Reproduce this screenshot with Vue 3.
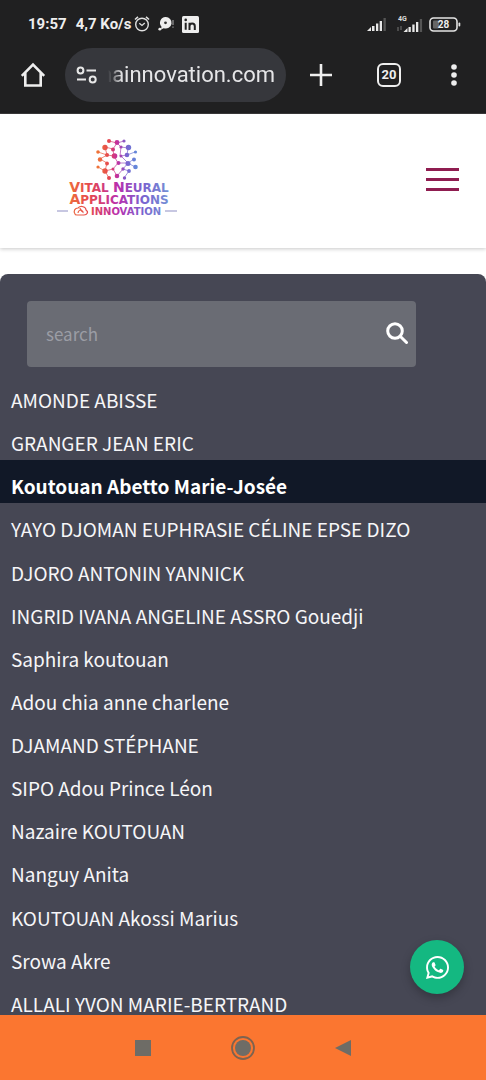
<script setup>
import { ref } from 'vue'

const address = ref('nainnovation.com')
const query = ref('')
const selected = ref(2)
const people = [
  'AMONDE ABISSE',
  'GRANGER JEAN ERIC',
  'Koutouan Abetto Marie-Josée',
  'YAYO DJOMAN EUPHRASIE CÉLINE EPSE DIZO',
  'DJORO ANTONIN YANNICK',
  'INGRID IVANA ANGELINE ASSRO Gouedji',
  'Saphira koutouan',
  'Adou chia anne charlene',
  'DJAMAND STÉPHANE',
  'SIPO Adou Prince Léon',
  'Nazaire KOUTOUAN',
  'Nanguy Anita',
  'KOUTOUAN Akossi Marius',
  'Srowa Akre',
  'ALLALI YVON MARIE-BERTRAND',
]
</script>

<template>
  <div class="screen">
    <div class="browser">
      <div class="status">
        <span class="time">19:57</span>
        <span class="rate">4,7 Ko/s</span>
        <svg class="alarm" width="16" height="18" viewBox="0 0 16 18" fill="none" stroke="#e0e0e0">
          <circle cx="8" cy="9.500" r="6.300" stroke-width="1.400" />
          <path d="M1 4.500 4 1.800M15 4.500 12 1.800" stroke-width="1.600" />
          <path d="M5.300 8.200 8 10.500 10.800 8" stroke-width="1.300" />
        </svg>
        <svg class="chat" width="16" height="16" viewBox="0 0 16 16">
          <path d="M7.500 1a5.800 5.800 0 1 1-1.800 11.200L3 13.500l.5-2.800A5.800 5.800 0 0 1 7.500 1z" fill="#eee" />
          <circle cx="7.500" cy="6.800" r="1.400" fill="#333" />
          <circle cx="1.800" cy="13.200" r="1.400" fill="#eee" />
          <path d="M15 4v5M15 10.500v1.200" stroke="#999" stroke-width="1.200" />
        </svg>
        <svg width="17" height="17" viewBox="0 0 17 17">
          <rect width="17" height="17" rx="1.500" fill="#eee" />
          <path d="M3.700 6.800v7M7.500 14V6.800M7.500 10.200c0-3.600 5.300-3.600 5.300 0V14" fill="none" stroke="#222" stroke-width="2" />
          <circle cx="3.700" cy="3.900" r="1.300" fill="#222" />
        </svg>
        <svg class="signal" width="20" height="14" viewBox="0 0 20 14">
          <path d="M0 14l4-4v4zM5 9h2.500v5H5zM9 6.500h2.300V14H9zM12.700 4H15v10h-2.300z" fill="#e8e8e8" />
          <path d="M16.500 1h2.300v13h-2.300z" fill="#555" />
        </svg>
        <svg class="signal4g" width="26" height="18" viewBox="0 0 26 18">
          <text x="1" y="6" font-family="Roboto, sans-serif" font-size="7" font-weight="700" fill="#ddd">4G</text>
          <path d="M1 12v4M4 11v4" stroke="#777" stroke-width="1" />
          <path d="M6.500 17l4-4v4zM11.500 12h2.300v5h-2.300zM15.300 9.500h2.300V17h-2.300zM19 7h2.300v10H19z" fill="#e8e8e8" />
          <path d="M22.800 4h2.300v13h-2.300z" fill="#555" />
        </svg>
        <svg width="33" height="15" viewBox="0 0 33 15">
          <rect x="1" y="1" width="27" height="13" rx="3.500" fill="none" stroke="#e4e4e4" stroke-width="1.600" />
          <rect x="4" y="3.500" width="6" height="8" rx="1" fill="#666" />
          <rect x="29.500" y="5.500" width="1.800" height="4" rx=".9" fill="#e4e4e4" />
          <text x="14.500" y="11" text-anchor="middle" font-family="Roboto, sans-serif" font-size="10" font-weight="700" fill="#eee">28</text>
        </svg>
      </div>
      <div class="toolbar">
        <button class="tool home" aria-label="Home">
          <svg width="26" height="26" viewBox="0 0 26 26" fill="none" stroke="#eee" stroke-width="2.600">
            <path d="M1.800 13.800 13 2.500l11.200 11.300M5.300 11v12.500h15.400V11" />
          </svg>
        </button>
        <div class="pill">
          <svg width="22" height="18" viewBox="0 0 22 18" fill="none" stroke="#e8e8e8" stroke-width="2">
            <circle cx="4.500" cy="4.500" r="2.900" />
            <path d="M10.500 4.500H20M1 13.500h9" />
            <circle cx="16.700" cy="13.500" r="3" />
          </svg>
          <input v-model="address" class="address" type="text" aria-label="Address">
        </div>
        <button class="tool add" aria-label="New tab">
          <svg width="22" height="22" viewBox="0 0 22 22" stroke="#eee" stroke-width="2.600">
            <path d="M11 0v22M0 11h22" />
          </svg>
        </button>
        <button class="tool tabs" aria-label="Tabs"><span class="count">20</span></button>
        <button class="tool more" aria-label="Menu">
          <svg width="6" height="22" viewBox="0 0 6 22" fill="#eee">
            <circle cx="3" cy="3" r="2.800" />
            <circle cx="3" cy="11" r="2.800" />
            <circle cx="3" cy="19" r="2.800" />
          </svg>
        </button>
      </div>
    </div>

    <header class="site">
      <a href="#" class="logo" aria-label="Vital Neural Applications &amp; Innovation">
        <svg width="122" height="84" viewBox="56 136 122 84">
          <defs>
            <linearGradient id="brand" gradientUnits="userSpaceOnUse" x1="62" y1="0" x2="174" y2="0">
              <stop offset="0" stop-color="#f07a35" />
              <stop offset=".25" stop-color="#e5484f" />
              <stop offset=".5" stop-color="#b92fae" />
              <stop offset=".72" stop-color="#7a62cf" />
              <stop offset="1" stop-color="#7399d6" />
            </linearGradient>
            <linearGradient id="web" gradientUnits="userSpaceOnUse" x1="96" y1="0" x2="138" y2="0">
              <stop offset="0" stop-color="#f07a35" />
              <stop offset=".3" stop-color="#e5484f" />
              <stop offset=".5" stop-color="#c42f9e" />
              <stop offset=".72" stop-color="#7a62cf" />
              <stop offset="1" stop-color="#5f8fdb" />
            </linearGradient>
          </defs>
          <path
            d="M109 141l8 2 7-2M117 143l-4 6-8-2M98 152l9 3M105 147l2 8M128 148l-7-1M128 148l-1 7M135 152l-8 3M117 143l4 4-1 9M114 156l-7-1M114 156l-1-6M100 159l7-4M100 159l7 4M107 163l-2 8M98 167l7 4 4 7M105 171l8-2 4 7M114 156l4 7-5 6M118 163l9 0M128 163l-7-7 6-1M134 159l-6 4M135 167l-7-4M128 163l-5 6 6 2M123 169l-6 7M129 171l-5 7"
            fill="none" stroke="url(#web)" stroke-width=".7" />
          <g fill="url(#web)">
            <circle cx="109" cy="141" r="2" /><circle cx="117" cy="142.500" r="2.400" /><circle cx="124" cy="141" r="1.600" />
            <circle cx="105" cy="147.500" r="2.700" /><circle cx="113" cy="149.500" r="2" /><circle cx="121" cy="147" r="1.600" />
            <circle cx="128.500" cy="147.500" r="2.700" /><circle cx="98" cy="152" r="1.800" /><circle cx="135.500" cy="152" r="1.600" />
            <circle cx="107" cy="155" r="2" /><circle cx="114.500" cy="156" r="2.800" /><circle cx="121" cy="156" r="1.500" />
            <circle cx="127" cy="155" r="2.300" /><circle cx="100" cy="159.500" r="2.200" /><circle cx="134" cy="159.500" r="2" />
            <circle cx="107" cy="163.500" r="1.900" /><circle cx="118.500" cy="163" r="2" /><circle cx="128" cy="163.500" r="2.500" />
            <circle cx="98" cy="167" r="1.600" /><circle cx="135.500" cy="167" r="2.300" /><circle cx="105" cy="171" r="2.700" />
            <circle cx="113" cy="169" r="1.500" /><circle cx="123" cy="169" r="1.700" /><circle cx="129" cy="171" r="1.900" />
            <circle cx="109" cy="178" r="2" /><circle cx="117" cy="176" r="2.300" /><circle cx="124.500" cy="178" r="1.700" />
          </g>
          <g class="brand" fill="url(#brand)" text-anchor="middle">
            <text x="119" y="192"><tspan class="cap">V</tspan>ITAL <tspan class="cap">N</tspan>EURAL</text>
            <text x="119" y="204"><tspan class="cap">A</tspan>PPLICATIONS</text>
            <text x="126" y="215" class="last">INNOVATION</text>
          </g>
          <path d="M57 211h11M165 211h12" stroke="#8f8fc4" stroke-width="1" />
          <g fill="none" stroke="url(#brand)" stroke-width="1.200">
            <path d="M75 214c-2-3 0-6 3-6 3-3 8-1 8 2 3 2 1 5-2 5H77c-1 0-2 0-2-1zM78 213c0-3 4-4 4-1M80 208c0 3 4 2 3 5" />
          </g>
        </svg>
      </a>
      <button class="burger" aria-label="Open menu"><span /><span /><span /></button>
    </header>

    <main class="content">
      <section class="panel">
        <form class="search" @submit.prevent>
          <input v-model="query" type="search" placeholder="search" aria-label="search">
          <button class="find" aria-label="Submit search">
            <svg width="22" height="22" viewBox="0 0 22 22" fill="none" stroke="#fff" stroke-width="3">
              <circle cx="9" cy="9" r="7.300" />
              <path d="M14.200 14.200 20.500 20.500" stroke-linecap="round" />
            </svg>
          </button>
        </form>
        <ul class="people">
          <li v-for="(name, i) in people" :key="name">
            <a href="#" :class="{ active: i === selected }" @click.prevent="selected = i">{{ name }}</a>
          </li>
        </ul>
      </section>
      <a href="#" class="fab" aria-label="WhatsApp">
        <svg width="23" height="23" viewBox="0 32 448 448" fill="#fff">
          <path d="M380.900 97.100C339 55.100 283.200 32 223.900 32c-122.400 0-222 99.600-222 222 0 39.100 10.200 77.300 29.600 111L0 480l117.700-30.900c32.400 17.700 68.900 27 106.100 27h.1c122.300 0 224.100-99.600 224.100-222 0-59.300-25.200-115-67.100-157zm-157 341.600c-33.200 0-65.700-8.900-94-25.700l-6.700-4-69.800 18.300L72 359.200l-4.400-7c-18.500-29.400-28.200-63.300-28.200-98.200 0-101.700 82.800-184.500 184.600-184.500 49.300 0 95.600 19.200 130.400 54.100 34.800 34.900 56.200 81.200 56.100 130.500 0 101.800-84.900 184.600-186.600 184.600zm101.200-138.200c-5.500-2.800-32.800-16.200-37.900-18-5.100-1.900-8.800-2.800-12.500 2.800-3.700 5.600-14.300 18-17.600 21.800-3.200 3.700-6.500 4.200-12 1.400-32.600-16.300-54-29.100-75.500-66-5.700-9.800 5.700-9.100 16.300-30.300 1.800-3.700.9-6.900-.5-9.700-1.400-2.800-12.500-30.100-17.100-41.200-4.500-10.800-9.100-9.300-12.500-9.500-3.200-.2-6.900-.2-10.600-.2-3.700 0-9.700 1.400-14.800 6.900-5.100 5.600-19.400 19-19.400 46.300 0 27.300 19.900 53.700 22.600 57.400 2.800 3.700 39.100 59.700 94.800 83.800 35.200 15.200 49 16.500 66.600 13.900 10.700-1.600 32.800-13.400 37.400-26.400 4.600-13 4.600-24.100 3.200-26.400-1.300-2.500-5-3.900-10.500-6.600z" />
        </svg>
      </a>
    </main>

    <nav class="system">
      <button aria-label="Recent apps">
        <svg width="16" height="16" viewBox="0 0 16 16"><rect width="16" height="16" fill="#6e6c66" /></svg>
      </button>
      <button aria-label="Home screen">
        <svg width="24" height="24" viewBox="0 0 24 24">
          <circle cx="12" cy="12" r="11" fill="none" stroke="#7d6350" stroke-width="1.800" />
          <circle cx="12" cy="12" r="8" fill="#6e6c66" />
        </svg>
      </button>
      <button aria-label="Back">
        <svg width="16" height="18" viewBox="0 0 16 18"><path d="M16 1v16L0 9z" fill="#6e6c66" /></svg>
      </button>
    </nav>
  </div>
</template>

<style>
body {
  margin: 0;
  background: #fff;
}
</style>

<style scoped>
* {
  box-sizing: border-box;
}
svg {
  display: block;
  flex: none;
}
button {
  display: flex;
  align-items: center;
  justify-content: center;
  padding: 0;
  border: 0;
  background: none;
  color: inherit;
  font: inherit;
}
.screen {
  display: flex;
  flex-direction: column;
  height: 100vh;
  font-family: "Noto Sans CJK SC", "Noto Sans", sans-serif;
}
.browser {
  flex: none;
  background: #202021;
  border-bottom: 1px solid #3c3a3c;
  color: #eee;
  font-family: Roboto, sans-serif;
}
.status {
  display: flex;
  align-items: center;
  height: 48px;
  padding: 0 24px 0 28px;
  font-size: 15px;
  font-weight: 700;
  line-height: 18px;
}
.rate {
  margin-left: 9px;
}
.alarm {
  margin-left: 3px;
}
.chat {
  margin: 0 8px;
}
.signal {
  margin-left: auto;
}
.signal4g {
  margin: 0 6px 0 10px;
}
.toolbar {
  display: flex;
  align-items: center;
  padding-bottom: 11px;
}
.tool {
  flex: none;
  height: 54px;
}
.home {
  width: 65px;
}
.add {
  width: 70px;
}
.tabs {
  width: 66px;
}
.more {
  width: 64px;
}
.count {
  width: 24px;
  height: 24px;
  border: 2px solid #eee;
  border-radius: 6px;
  font-size: 13px;
  font-weight: 700;
  line-height: 20px;
}
.pill {
  display: flex;
  flex: 1;
  align-items: center;
  gap: 10px;
  min-width: 0;
  height: 54px;
  padding: 0 11px;
  border-radius: 27px;
  background: #36373c;
}
.address {
  flex: 1;
  min-width: 0;
  padding: 0;
  border: 0;
  outline: 0;
  background: none;
  color: #e6e6e8;
  font-family: Roboto, sans-serif;
  font-size: 22px;
  line-height: 28px;
  direction: rtl;
  mask-image: linear-gradient(to right, transparent, #000 14px);
}
.site {
  display: flex;
  flex: none;
  align-items: center;
  justify-content: space-between;
  height: 134px;
  padding: 0 27px 4px 56px;
  background: #fff;
  box-shadow: 0 1px 4px rgba(0, 0, 0, 0.22);
}
.logo {
  padding-bottom: 2px;
}
.brand {
  font-family: "DejaVu Sans", sans-serif;
  font-size: 12px;
  font-weight: 700;
}
.brand .cap {
  font-size: 14px;
}
.brand .last {
  font-size: 10px;
}
.burger {
  flex-direction: column;
  gap: 7px;
}
.burger span {
  width: 33px;
  height: 3px;
  background: #8f1d50;
}
.content {
  position: relative;
  display: flex;
  flex: 1;
  flex-direction: column;
  min-height: 0;
  padding-top: 26px;
}
.panel {
  display: flex;
  flex: 1;
  flex-direction: column;
  min-height: 0;
  overflow: hidden;
  padding-top: 27px;
  border-radius: 8px 8px 0 0;
  background: #464754;
}
.search {
  display: flex;
  flex: none;
  align-items: center;
  width: 80%;
  height: 66px;
  margin: 0 27px 7px;
  border-radius: 4px;
  background: #6a6c74;
}
.search input {
  flex: 1;
  min-width: 0;
  padding: 0 19px;
  border: 0;
  outline: 0;
  background: none;
  color: #fff;
  font-family: inherit;
  font-size: 17px;
  line-height: 24px;
  appearance: none;
}
.search input::placeholder {
  color: #9b9da5;
}
.find {
  height: 60px;
  padding: 0 8px 3px;
}
.people {
  display: grid;
  flex: 1;
  grid-auto-rows: 1fr;
  margin: 0 0 -6px;
  padding: 0;
  list-style: none;
}
.people a {
  display: block;
  height: 100%;
  padding: 14px 11px 0;
  color: #f6f6f8;
  font-size: 19px;
  line-height: 24px;
  text-decoration: none;
  white-space: nowrap;
}
.people .active {
  background: #111827;
  color: #fff;
  font-weight: 700;
}
.fab {
  position: absolute;
  right: 22px;
  bottom: 21px;
  display: flex;
  align-items: center;
  justify-content: center;
  width: 54px;
  height: 54px;
  border-radius: 50%;
  background: #14b881;
  box-shadow: 0 4px 10px rgba(0, 0, 0, 0.25);
}
.system {
  display: flex;
  flex: none;
  align-items: center;
  justify-content: center;
  height: 65px;
  background: #fb7630;
}
.system button {
  width: 100px;
  height: 65px;
}
</style>
